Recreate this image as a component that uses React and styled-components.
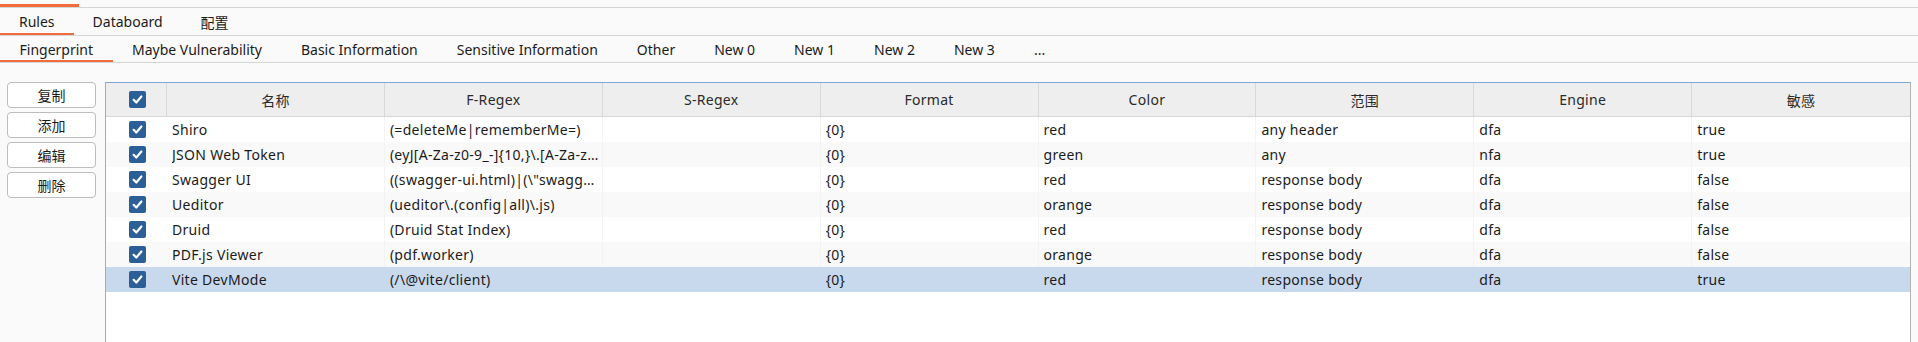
import React, {useState} from 'react';
import styled, {createGlobalStyle} from 'styled-components';

const GlobalStyle = createGlobalStyle`
    html, body {
        margin: 0;
        padding: 0;
        background: #fafafa;
    }
    body {
        font-family: "Noto Sans", "Noto Sans CJK SC", sans-serif;
        font-size: 14px;
        color: #1b1b1b;
    }
`;

const Page = styled.div`
    display: flex;
    flex-direction: column;
    height: 100vh;
    overflow: hidden;
`;

const TopStrip = styled.div`
    height: 3px;
    padding-top: 4px;
    border-bottom: 1px solid #d3d7d7;
`;

const StripAccent = styled.div`
    width: 79px;
    height: 3px;
    background: #f26b3a;
`;

const TabBar = styled.div`
    display: flex;
    height: ${props => props.$height}px;
    border-bottom: 1px solid #d3d7d7;
`;

const Tab = styled.div`
    display: flex;
    align-items: center;
    padding: 0 ${props => props.$pad}px;
    box-sizing: border-box;
    height: 100%;
    cursor: pointer;
    white-space: nowrap;
    color: #1b1b1b;
    box-shadow: ${props => props.$active ? 'inset 0 -2px 0 #f26b3a' : 'none'};
`;

const Content = styled.div`
    flex: 1;
    display: flex;
    gap: 9px;
    padding: 19px 7px 0 7px;
    min-height: 0;
`;

const SideBar = styled.div`
    display: flex;
    flex-direction: column;
    gap: 4px;
    width: 89px;
    flex-shrink: 0;
`;

const Button = styled.button`
    height: 26px;
    border: 1px solid #bdbdbd;
    border-radius: 4px;
    background: #fff;
    font-family: "Noto Sans CJK SC", sans-serif;
    font-size: 14px;
    color: #1b1b1b;
    padding: 0;
`;

const Table = styled.div`
    flex: 1;
    display: flex;
    flex-direction: column;
    background: #fff;
    border-top: 1px solid #7ea7d6;
    border-left: 1px solid #8db0da;
    border-right: 1px solid #b3b3b3;
    min-width: 0;
`;

const Row = styled.div`
    display: grid;
    grid-template-columns: 61px repeat(8, 1fr);
    height: ${props => props.$header ? 33 : 25}px;
    background: ${props => props.$header ? '#eeeeee' : props.$selected ? '#c8d9ee' : props.$striped ? '#f9f9f9' : '#ffffff'};
    border-bottom: ${props => props.$header ? '1px solid #d6d6d6' : 'none'};
`;

const HeadCell = styled.div`
    display: flex;
    align-items: center;
    justify-content: center;
    border-right: 1px solid #d8d8d8;
    color: #2a2a2a;
    letter-spacing: 0.3px;
    white-space: nowrap;
    &:last-child {
        border-right: none;
    }
`;

const Cell = styled.div`
    display: flex;
    align-items: center;
    padding-left: 5px;
    min-width: 0;
    letter-spacing: 0.3px;
    border-right: 1px solid ${props => props.$selected ? 'transparent' : '#f3f3f3'};
    &:last-child {
        border-right: none;
    }
`;

const CellText = styled.span`
    white-space: nowrap;
    overflow: hidden;
    text-overflow: ellipsis;
`;

const CheckCell = styled.div`
    display: flex;
    align-items: center;
    justify-content: center;
    border-right: ${props => props.$header ? '1px solid #d8d8d8' : 'none'};
`;

const CheckBox = styled.span`
    display: inline-flex;
    align-items: center;
    justify-content: center;
    width: 17px;
    height: 17px;
    border-radius: 2px;
    background: #2c5f98;
    margin-left: 2px;
`;

const Check = () => (
    <CheckBox>
        <svg width="13" height="13" viewBox="0 0 12 12">
            <path d="M2.4 6.3 L4.9 8.8 L9.6 3.2" fill="none" stroke="#fff" strokeWidth="2" strokeLinecap="round" strokeLinejoin="round" />
        </svg>
    </CheckBox>
);

const topTabs = ['Rules', 'Databoard', '配置'];
const subTabs = ['Fingerprint', 'Maybe Vulnerability', 'Basic Information', 'Sensitive Information', 'Other', 'New 0', 'New 1', 'New 2', 'New 3', '...'];
const columns = ['名称', 'F-Regex', 'S-Regex', 'Format', 'Color', '范围', 'Engine', '敏感'];

const rules = [
    ['Shiro', '(=deleteMe|rememberMe=)', '', '{0}', 'red', 'any header', 'dfa', 'true'],
    ['JSON Web Token', '(eyJ[A-Za-z0-9_-]{10,}\\.[A-Za-z0-9._-]{10,}|eyJ[A-Za-z0-9_\\/+-]{10,}\\.[A-Za-z0-9._\\/+-]{10,})', '', '{0}', 'green', 'any', 'nfa', 'true'],
    ['Swagger UI', '((swagger-ui.html)|(\\"swagger\\":)|(Swagger UI)|(swaggerUi)|(swaggerVersion))', '', '{0}', 'red', 'response body', 'dfa', 'false'],
    ['Ueditor', '(ueditor\\.(config|all)\\.js)', '', '{0}', 'orange', 'response body', 'dfa', 'false'],
    ['Druid', '(Druid Stat Index)', '', '{0}', 'red', 'response body', 'dfa', 'false'],
    ['PDF.js Viewer', '(pdf.worker)', '', '{0}', 'orange', 'response body', 'dfa', 'false'],
    ['Vite DevMode', '(/\\@vite/client)', '', '{0}', 'red', 'response body', 'dfa', 'true'],
];

export default function App() {
    const [topTab, setTopTab] = useState(0);
    const [subTab, setSubTab] = useState(0);
    const selected = 6;

    return (
        <Page>
            <GlobalStyle />
            <TopStrip>
                <StripAccent />
            </TopStrip>
            <TabBar $height={27}>
                {topTabs.map((t, i) => (
                    <Tab key={t} $pad={19} $active={i === topTab} onClick={() => setTopTab(i)}>{t}</Tab>
                ))}
            </TabBar>
            <TabBar $height={26}>
                {subTabs.map((t, i) => (
                    <Tab key={t} $pad={19.5} $active={i === subTab} onClick={() => setSubTab(i)}>{t}</Tab>
                ))}
            </TabBar>
            <Content>
                <SideBar>
                    <Button>复制</Button>
                    <Button>添加</Button>
                    <Button>编辑</Button>
                    <Button>删除</Button>
                </SideBar>
                <Table>
                    <Row $header>
                        <CheckCell $header><Check /></CheckCell>
                        {columns.map(c => <HeadCell key={c}>{c}</HeadCell>)}
                    </Row>
                    {rules.map((r, i) => (
                        <Row key={r[0]} $striped={i % 2 === 1} $selected={i === selected}>
                            <CheckCell><Check /></CheckCell>
                            {r.map((v, j) => (
                                <Cell key={j} $selected={i === selected}><CellText>{v}</CellText></Cell>
                            ))}
                        </Row>
                    ))}
                </Table>
            </Content>
        </Page>
    );
}
